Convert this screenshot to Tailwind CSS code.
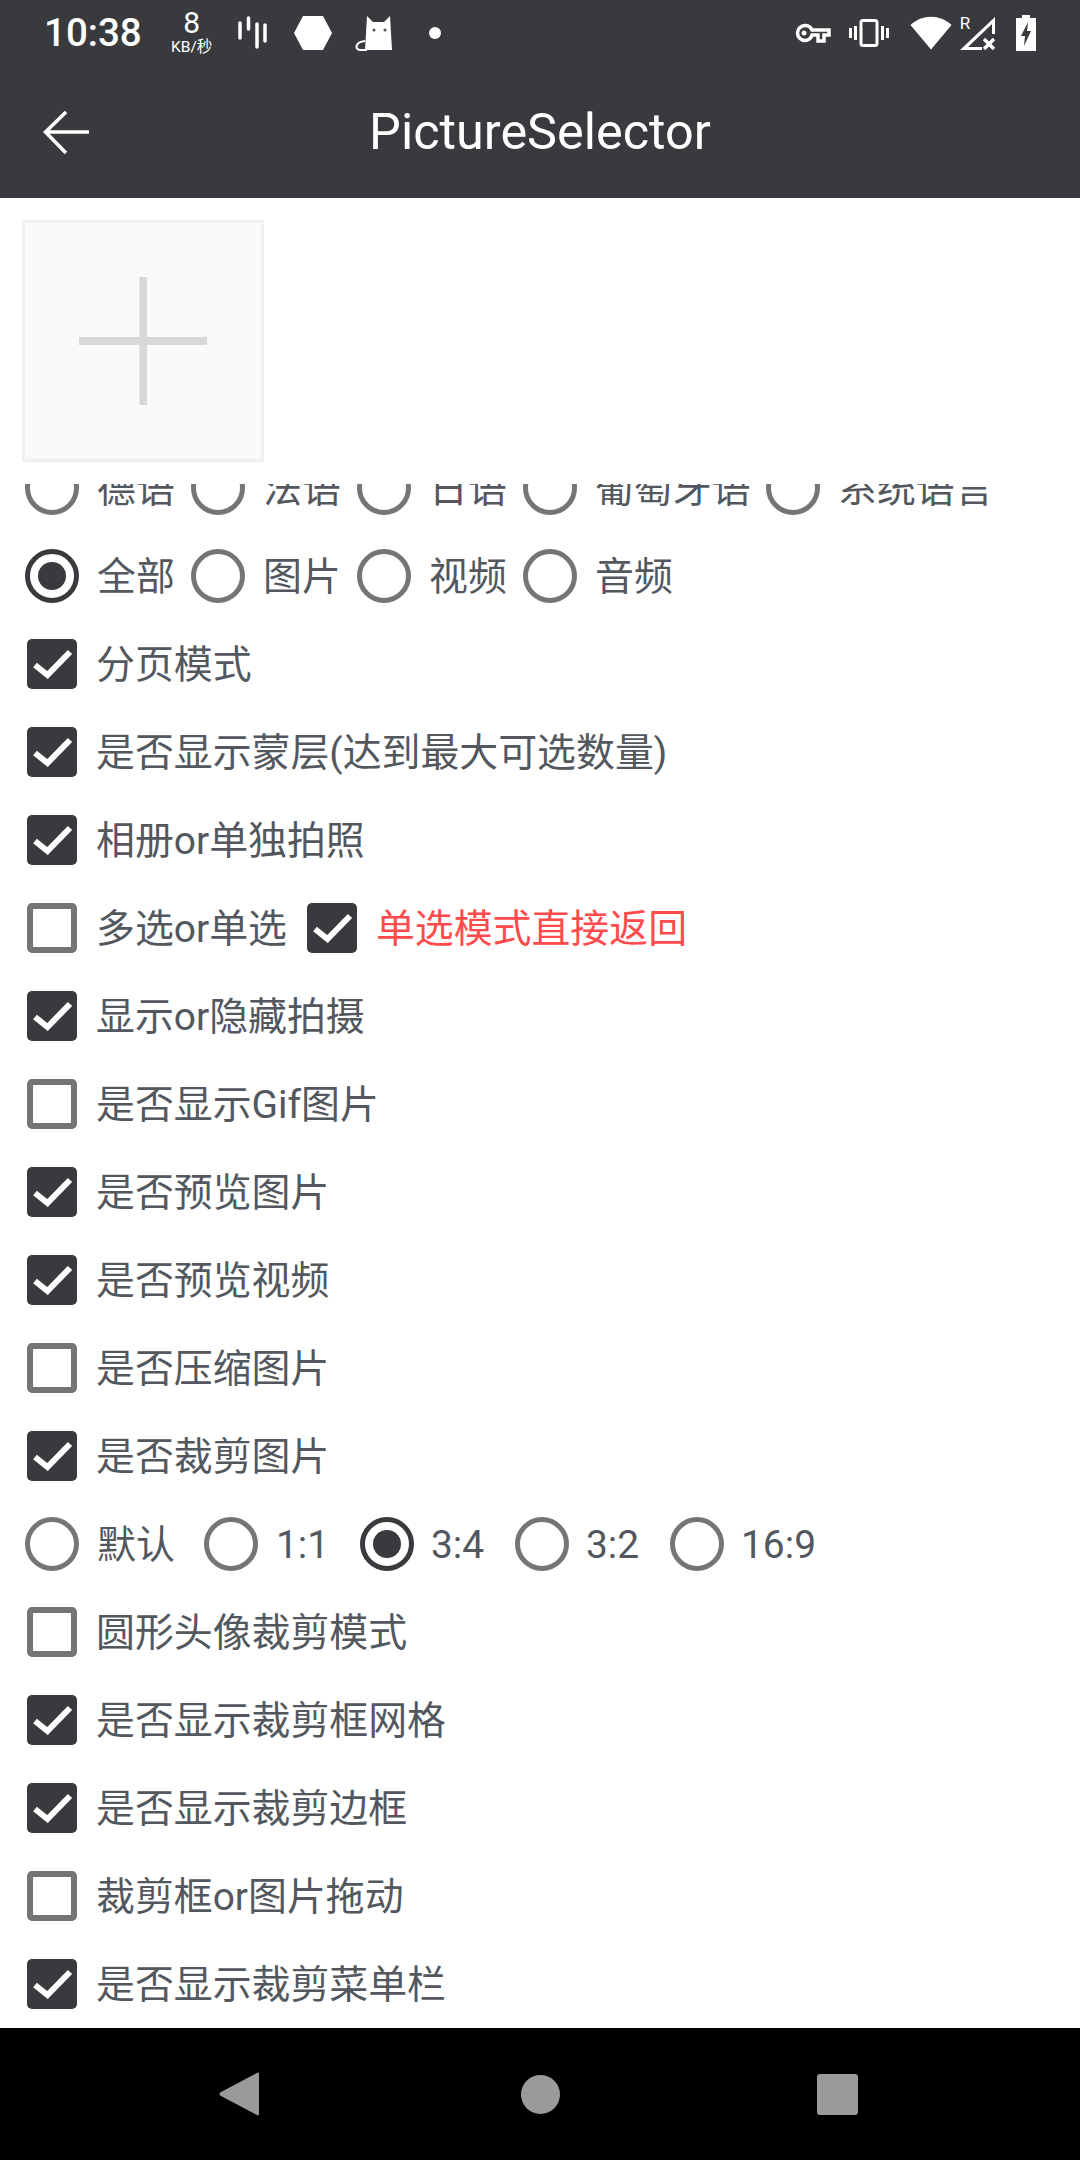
<!DOCTYPE html>
<html lang="zh-CN">
<head>
    <meta charset="UTF-8">
    <meta name="viewport" content="width=device-width, initial-scale=1.0">
    <title>PictureSelector</title>
    <script src="https://cdn.jsdelivr.net/npm/@tailwindcss/browser@4"></script>
</head>
<body class="bg-white font-['Roboto','Noto_Sans_CJK_SC',sans-serif]">
    <!-- shared icons -->
    <svg class="hidden">
        <symbol id="tick" viewBox="0 0 50 50"><path d="M8 26L20.500 36L43 13" fill="none" stroke="#fff" stroke-width="6"/></symbol>
    </svg>

    <div class="w-[1080px] h-[2160px] flex flex-col overflow-hidden">
        <!-- status bar -->
        <div class="h-[66px] bg-[#393a3e] flex items-center text-white relative shrink-0">
            <span class="ml-[44px] text-[38.500px] font-medium leading-none">10:38</span>
            <div class="ml-[29px] w-[42px] flex flex-col items-center -mt-[1px]">
                <span class="text-[30px] leading-[25px] mb-[4px]">8</span>
                <span class="text-[15.500px] leading-[16px] whitespace-nowrap">KB/秒</span>
            </div>
            <svg class="ml-[25px]" width="30" height="34" viewBox="0 0 30 34"><path d="M2 7V22M10.500 2V13M19 8V31M27 9V25" stroke="#fff" stroke-width="3.500" stroke-linecap="round"/></svg>
            <svg class="ml-[25px]" width="40" height="36" viewBox="0 0 40 36"><path d="M10 1H30L39 18L30 35H10L1 18Z" fill="#fff"/></svg>
            <svg class="ml-[22px]" width="38" height="36" viewBox="0 0 38 36"><path d="M12 1L18 7H29L35 1L37 35H10Z" fill="#fff"/><path d="M10 26C0 27 -1 35 6 35H12" stroke="#fff" stroke-width="2" fill="none"/><circle cx="19" cy="15" r="1.500" fill="#555"/><circle cx="30" cy="15" r="1.500" fill="#555"/></svg>
            <span class="ml-[36px] w-[12px] h-[12px] rounded-full bg-white"></span>

            <svg class="ml-[354px]" width="36" height="20" viewBox="0 0 36 20"><path d="M10 2.500A7.500 7.500 0 1 0 10 17.500A7.500 7.500 0 0 0 17 12H23V18H29V12H34V7H17A7.500 7.500 0 0 0 10 2.500Z" fill="none" stroke="#fff" stroke-width="3.500"/><circle cx="9" cy="10" r="2.500" fill="#fff"/></svg>
            <svg class="ml-[18px]" width="40" height="28" viewBox="0 0 40 28"><rect x="12" y="1.500" width="16" height="25" rx="2" fill="none" stroke="#fff" stroke-width="3"/><path d="M6.500 7V21M1.500 9V19M33.500 7V21M38.500 9V19" stroke="#fff" stroke-width="3"/></svg>
            <svg class="ml-[21px]" width="42" height="34" viewBox="0 0 42 34"><path d="M0.500 9C12 -2 30 -2 41.500 9L21 33.500Z" fill="#fff"/></svg>
            <div class="ml-[8px] w-[36px] h-[34px] relative">
                <span class="absolute left-0 -top-[1px] text-[17px] leading-[17px]">R</span>
                <svg class="absolute left-0 top-0" width="36" height="34" viewBox="0 0 36 34"><path d="M35 1V18H32V8L8 31H22V34H0Z" fill="#fff"/><path d="M24 23L34 33M34 23L24 33" stroke="#fff" stroke-width="3.500"/></svg>
            </div>
            <svg class="ml-[19px]" width="22" height="36" viewBox="0 0 22 36"><path d="M7 0H15V3H21V36H1V3H7Z" fill="#fff"/><path d="M13 7L6 21H10L9 31L16 16H12Z" fill="#393a3e"/></svg>
        </div>

        <!-- app bar -->
        <div class="h-[132px] bg-[#393a3e] flex items-center justify-center relative shrink-0">
            <svg class="absolute left-[43px] top-[44px]" width="48" height="48" viewBox="0 0 48 48"><path d="M46 22H3M23 2L2.500 22L23 43" fill="none" stroke="#fff" stroke-width="3.500"/></svg>
            <span class="text-white text-[50.400px] leading-none mt-[1px]">PictureSelector</span>
        </div>

        <!-- add picture -->
        <div class="h-[286px] pt-[22px] pl-[22px] shrink-0">
            <div class="w-[242px] h-[242px] border-[3px] border-[#f0f0f0] bg-[#fafafa] flex items-center justify-center relative">
                <svg width="128" height="128" viewBox="0 0 128 128"><path d="M0 60H128V68H0Z" fill="#d8d8d8"/><path d="M60.500 0H68V128H60.500Z" fill="#d8d8d8"/></svg>
            </div>
        </div>

        <!-- option list (scrolled) -->
        <div class="flex-1 overflow-hidden text-[38.900px] text-[#53575e]">
            <div class="-mt-[40px]">
                <div class="h-[88px] flex items-center pl-[25px]">
                    <span class="w-[54px] h-[54px] shrink-0 rounded-full border-[5px] border-[#757575]"></span><span class="pt-[2px] ml-[18px] w-[94px]">德语</span>
                    <span class="w-[54px] h-[54px] shrink-0 rounded-full border-[5px] border-[#757575]"></span><span class="pt-[2px] ml-[18px] w-[94px]">法语</span>
                    <span class="w-[54px] h-[54px] shrink-0 rounded-full border-[5px] border-[#757575]"></span><span class="pt-[2px] ml-[18px] w-[94px]">日语</span>
                    <span class="w-[54px] h-[54px] shrink-0 rounded-full border-[5px] border-[#757575]"></span><span class="pt-[2px] ml-[18px] w-[171px]">葡萄牙语</span>
                    <span class="w-[54px] h-[54px] shrink-0 rounded-full border-[5px] border-[#757575]"></span><span class="pt-[2px] ml-[18px]">系统语言</span>
                </div>
                <div class="h-[88px] flex items-center pl-[25px]">
                    <span class="w-[54px] h-[54px] shrink-0 rounded-full border-[5px] border-[#393a3e] flex items-center justify-center"><span class="w-[28px] h-[28px] rounded-full bg-[#393a3e]"></span></span><span class="pt-[2px] ml-[18px] w-[94px]">全部</span>
                    <span class="w-[54px] h-[54px] shrink-0 rounded-full border-[5px] border-[#757575]"></span><span class="pt-[2px] ml-[18px] w-[94px]">图片</span>
                    <span class="w-[54px] h-[54px] shrink-0 rounded-full border-[5px] border-[#757575]"></span><span class="pt-[2px] ml-[18px] w-[94px]">视频</span>
                    <span class="w-[54px] h-[54px] shrink-0 rounded-full border-[5px] border-[#757575]"></span><span class="pt-[2px] ml-[18px]">音频</span>
                </div>
                <div class="h-[88px] flex items-center pl-[27px]"><span class="w-[50px] h-[50px] shrink-0 rounded-[5px] bg-[#393a3e]"><svg width="50" height="50"><use href="#tick"/></svg></span><span class="pt-[2px] ml-[19px]">分页模式</span></div>
                <div class="h-[88px] flex items-center pl-[27px]"><span class="w-[50px] h-[50px] shrink-0 rounded-[5px] bg-[#393a3e]"><svg width="50" height="50"><use href="#tick"/></svg></span><span class="pt-[2px] ml-[19px]">是否显示蒙层(达到最大可选数量)</span></div>
                <div class="h-[88px] flex items-center pl-[27px]"><span class="w-[50px] h-[50px] shrink-0 rounded-[5px] bg-[#393a3e]"><svg width="50" height="50"><use href="#tick"/></svg></span><span class="pt-[2px] ml-[19px]">相册or单独拍照</span></div>
                <div class="h-[88px] flex items-center pl-[27px]">
                    <span class="w-[50px] h-[50px] shrink-0 rounded-[5px] border-[6px] border-[#757575]"></span><span class="pt-[2px] ml-[19px]">多选or单选</span>
                    <span class="ml-[20px] w-[50px] h-[50px] shrink-0 rounded-[5px] bg-[#393a3e]"><svg width="50" height="50"><use href="#tick"/></svg></span><span class="pt-[2px] ml-[19px] text-[#ff4b4b]">单选模式直接返回</span>
                </div>
                <div class="h-[88px] flex items-center pl-[27px]"><span class="w-[50px] h-[50px] shrink-0 rounded-[5px] bg-[#393a3e]"><svg width="50" height="50"><use href="#tick"/></svg></span><span class="pt-[2px] ml-[19px]">显示or隐藏拍摄</span></div>
                <div class="h-[88px] flex items-center pl-[27px]"><span class="w-[50px] h-[50px] shrink-0 rounded-[5px] border-[6px] border-[#757575]"></span><span class="pt-[2px] ml-[19px]">是否显示Gif图片</span></div>
                <div class="h-[88px] flex items-center pl-[27px]"><span class="w-[50px] h-[50px] shrink-0 rounded-[5px] bg-[#393a3e]"><svg width="50" height="50"><use href="#tick"/></svg></span><span class="pt-[2px] ml-[19px]">是否预览图片</span></div>
                <div class="h-[88px] flex items-center pl-[27px]"><span class="w-[50px] h-[50px] shrink-0 rounded-[5px] bg-[#393a3e]"><svg width="50" height="50"><use href="#tick"/></svg></span><span class="pt-[2px] ml-[19px]">是否预览视频</span></div>
                <div class="h-[88px] flex items-center pl-[27px]"><span class="w-[50px] h-[50px] shrink-0 rounded-[5px] border-[6px] border-[#757575]"></span><span class="pt-[2px] ml-[19px]">是否压缩图片</span></div>
                <div class="h-[88px] flex items-center pl-[27px]"><span class="w-[50px] h-[50px] shrink-0 rounded-[5px] bg-[#393a3e]"><svg width="50" height="50"><use href="#tick"/></svg></span><span class="pt-[2px] ml-[19px]">是否裁剪图片</span></div>
                <div class="h-[88px] flex items-center pl-[25px]">
                    <span class="w-[54px] h-[54px] shrink-0 rounded-full border-[5px] border-[#757575]"></span><span class="pt-[2px] ml-[18px] w-[107px]">默认</span>
                    <span class="w-[54px] h-[54px] shrink-0 rounded-full border-[5px] border-[#757575]"></span><span class="pt-[2px] ml-[18px] w-[84px]">1:1</span>
                    <span class="w-[54px] h-[54px] shrink-0 rounded-full border-[5px] border-[#393a3e] flex items-center justify-center"><span class="w-[28px] h-[28px] rounded-full bg-[#393a3e]"></span></span><span class="pt-[2px] ml-[17px] w-[84px]">3:4</span>
                    <span class="w-[54px] h-[54px] shrink-0 rounded-full border-[5px] border-[#757575]"></span><span class="pt-[2px] ml-[17px] w-[84px]">3:2</span>
                    <span class="w-[54px] h-[54px] shrink-0 rounded-full border-[5px] border-[#757575]"></span><span class="pt-[2px] ml-[17px]">16:9</span>
                </div>
                <div class="h-[88px] flex items-center pl-[27px]"><span class="w-[50px] h-[50px] shrink-0 rounded-[5px] border-[6px] border-[#757575]"></span><span class="pt-[2px] ml-[19px]">圆形头像裁剪模式</span></div>
                <div class="h-[88px] flex items-center pl-[27px]"><span class="w-[50px] h-[50px] shrink-0 rounded-[5px] bg-[#393a3e]"><svg width="50" height="50"><use href="#tick"/></svg></span><span class="pt-[2px] ml-[19px]">是否显示裁剪框网格</span></div>
                <div class="h-[88px] flex items-center pl-[27px]"><span class="w-[50px] h-[50px] shrink-0 rounded-[5px] bg-[#393a3e]"><svg width="50" height="50"><use href="#tick"/></svg></span><span class="pt-[2px] ml-[19px]">是否显示裁剪边框</span></div>
                <div class="h-[88px] flex items-center pl-[27px]"><span class="w-[50px] h-[50px] shrink-0 rounded-[5px] border-[6px] border-[#757575]"></span><span class="pt-[2px] ml-[19px]">裁剪框or图片拖动</span></div>
                <div class="h-[88px] flex items-center pl-[27px]"><span class="w-[50px] h-[50px] shrink-0 rounded-[5px] bg-[#393a3e]"><svg width="50" height="50"><use href="#tick"/></svg></span><span class="pt-[2px] ml-[19px]">是否显示裁剪菜单栏</span></div>
            </div>
        </div>

        <!-- navigation bar -->
        <div class="h-[132px] bg-black relative shrink-0">
            <svg class="absolute left-[219px] top-[44px]" width="41" height="44" viewBox="0 0 41 44"><path d="M38 1C39 0 40 1 40 2V42C40 43 39 44 38 43L2 24C0 23 0 21 2 20Z" fill="#9a9a9a"/></svg>
            <span class="absolute left-[521px] top-[47px] w-[39px] h-[39px] rounded-full bg-[#9a9a9a]"></span>
            <span class="absolute left-[817px] top-[46px] w-[41px] h-[41px] rounded-[3px] bg-[#9a9a9a]"></span>
        </div>
    </div>
</body>
</html>
